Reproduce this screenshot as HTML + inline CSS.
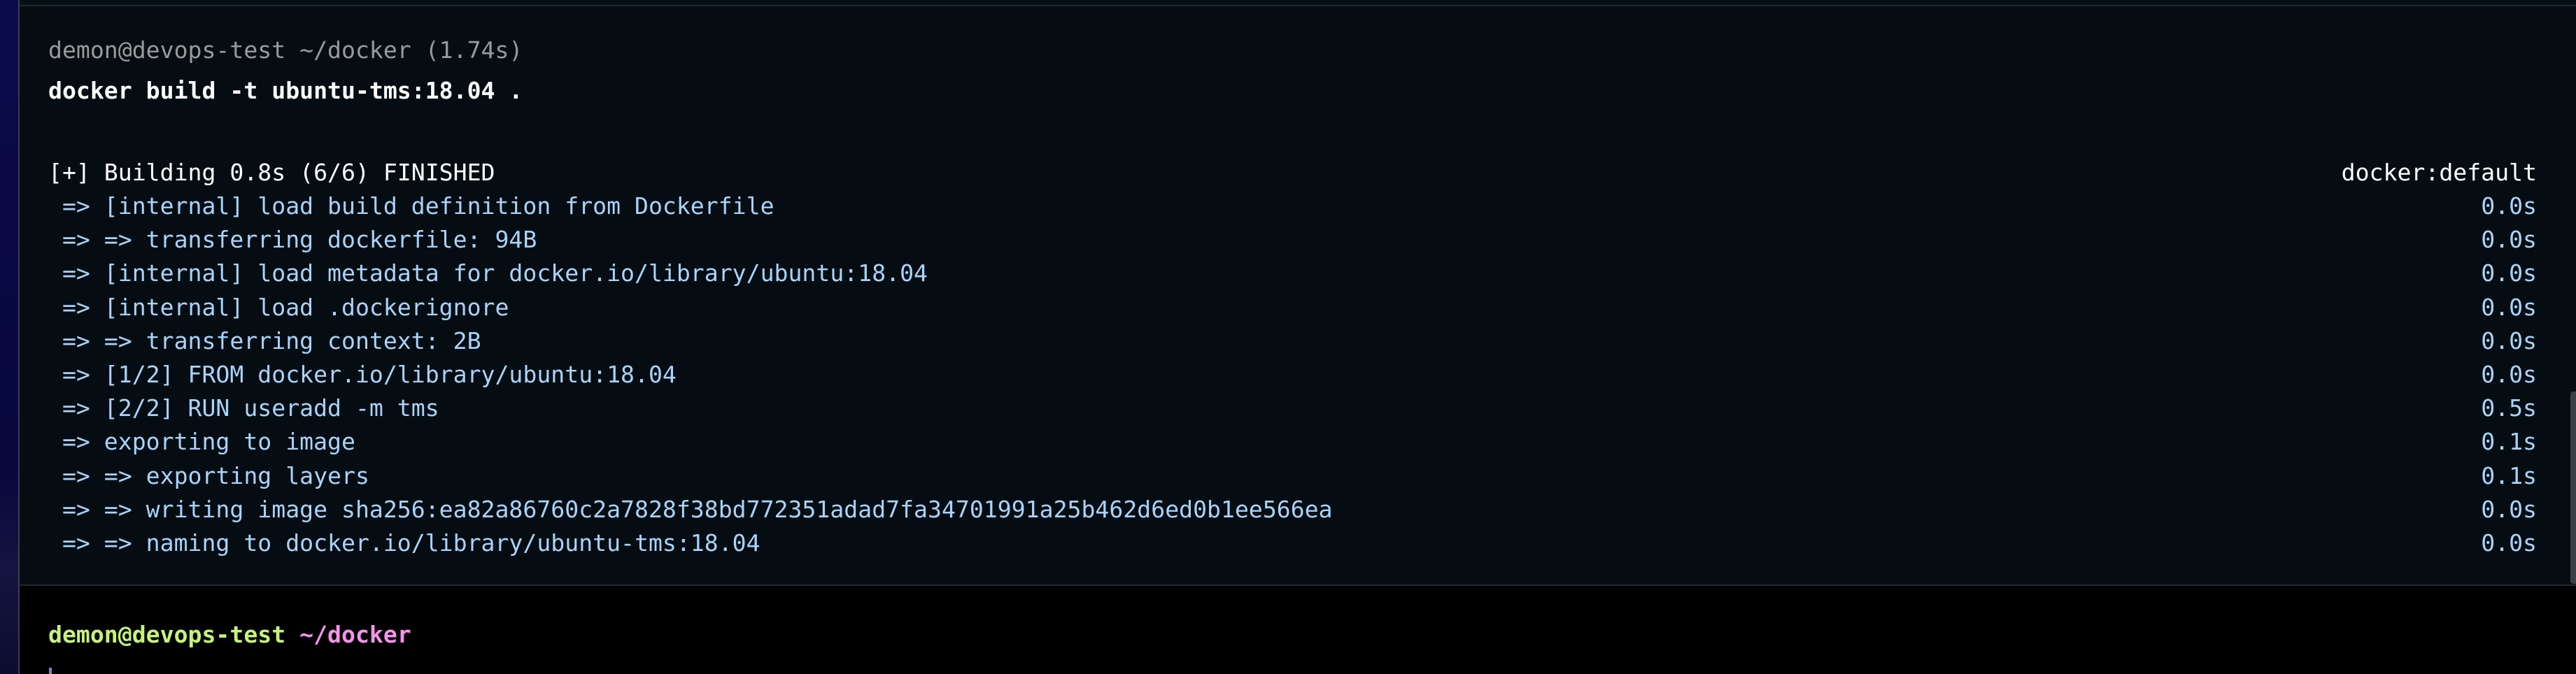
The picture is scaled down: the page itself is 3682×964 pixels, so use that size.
<!DOCTYPE html>
<html><head><meta charset="utf-8"><style>
html,body{margin:0;padding:0;width:3682px;height:964px;overflow:hidden;background:#03080c;}
body{position:relative;font-family:"DejaVu Sans Mono","Liberation Mono",monospace;font-size:33.15px;}
.strip{position:absolute;left:0;top:0;width:26px;height:964px;background:linear-gradient(#0b0a4a,#08083e 70%,#141540 85%,#0c0c30);}
.bord{position:absolute;left:26px;top:0;width:2px;height:964px;background:#3a3d4a;}
.top{position:absolute;left:28px;top:0;right:0;height:7px;background:#070f15;}
.topline{position:absolute;left:28px;top:7px;right:0;height:2px;background:#1f2a33;}
.upper{position:absolute;left:28px;top:9px;right:0;height:828px;background:#050d12;}
.sep{position:absolute;left:28px;top:836px;right:0;height:2px;background:#23272b;}
.lower{position:absolute;left:28px;top:838px;right:0;bottom:0;background:#000;}
.l{position:absolute;left:69px;white-space:pre;line-height:48px;height:48px;}
.r{position:absolute;right:56px;white-space:pre;line-height:48px;height:48px;color:#a9d3fb;}
.b{color:#a9d3fb;}
.sb{position:absolute;left:3674px;top:560px;width:8px;height:275px;background:#3c3f42;border-radius:4px 0 0 4px;}
.cur{position:absolute;left:70px;top:955px;width:4px;height:12px;background:#8a7fb0;}
</style></head><body>
<div class="strip"></div><div class="bord"></div>
<div class="top"></div><div class="topline"></div>
<div class="upper"></div><div class="sep"></div><div class="lower"></div>
<div class="l" style="top:48px;color:#9a9a9a">demon@devops-test ~/docker (1.74s)</div>
<div class="l" style="top:106px;color:#fff;font-weight:bold">docker build -t ubuntu-tms:18.04 .</div>
<div class="l" style="top:223px;color:#fff">[+] Building 0.8s (6/6) FINISHED</div>
<div class="r" style="top:223px;color:#fff">docker:default</div>
<div class="l b" style="top:271px"> =&gt; [internal] load build definition from Dockerfile</div>
<div class="l b" style="top:319px"> =&gt; =&gt; transferring dockerfile: 94B</div>
<div class="l b" style="top:367px"> =&gt; [internal] load metadata for docker.io/library/ubuntu:18.04</div>
<div class="l b" style="top:416px"> =&gt; [internal] load .dockerignore</div>
<div class="l b" style="top:464px"> =&gt; =&gt; transferring context: 2B</div>
<div class="l b" style="top:512px"> =&gt; [1/2] FROM docker.io/library/ubuntu:18.04</div>
<div class="l b" style="top:560px"> =&gt; [2/2] RUN useradd -m tms</div>
<div class="l b" style="top:608px"> =&gt; exporting to image</div>
<div class="l b" style="top:657px"> =&gt; =&gt; exporting layers</div>
<div class="l b" style="top:705px"> =&gt; =&gt; writing image sha256:ea82a86760c2a7828f38bd772351adad7fa34701991a25b462d6ed0b1ee566ea</div>
<div class="l b" style="top:753px"> =&gt; =&gt; naming to docker.io/library/ubuntu-tms:18.04</div>
<div class="r" style="top:271px">0.0s</div>
<div class="r" style="top:319px">0.0s</div>
<div class="r" style="top:367px">0.0s</div>
<div class="r" style="top:416px">0.0s</div>
<div class="r" style="top:464px">0.0s</div>
<div class="r" style="top:512px">0.0s</div>
<div class="r" style="top:560px">0.5s</div>
<div class="r" style="top:608px">0.1s</div>
<div class="r" style="top:657px">0.1s</div>
<div class="r" style="top:705px">0.0s</div>
<div class="r" style="top:753px">0.0s</div>
<div class="sb"></div>
<div class="l" style="top:884px;font-weight:bold"><span style="color:#c6f27c">demon@devops-test</span> <span style="color:#f393ea">~/docker</span></div>
<div class="cur"></div>
</body></html>
